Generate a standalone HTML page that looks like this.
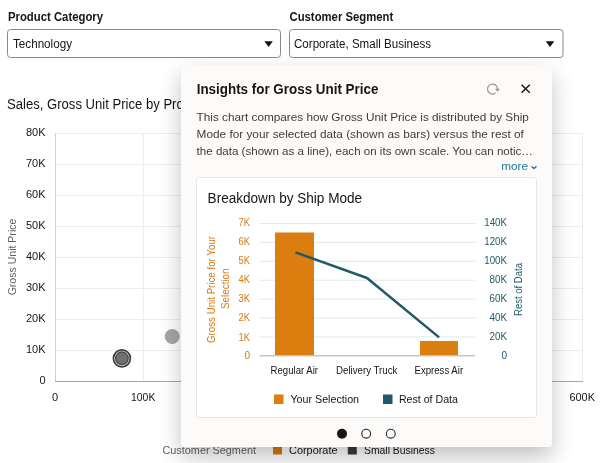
<!DOCTYPE html>
<html><head><meta charset="utf-8"><title>Insights</title>
<style>
html,body{margin:0;padding:0;background:#fff;}
body{width:600px;height:463px;overflow:hidden;position:relative;font-family:"Liberation Sans",sans-serif;}
svg{position:absolute;left:0;top:0;display:block;will-change:transform}
text{font-family:"Liberation Sans",sans-serif;}
.pop{position:absolute;left:181px;top:64.500px;width:371px;height:382px;background:#fcfbfa;border-radius:3px;box-shadow:0 10px 22px rgba(0,0,0,.24);}
.card{position:absolute;left:196px;top:177px;width:340.500px;height:241px;background:#fff;border:1px solid #e9e6e3;border-radius:3px;box-sizing:border-box}
</style></head><body>
<!-- background layer -->
<svg id="bg" width="600" height="463" viewBox="0 0 600 463">
  <text x="8" y="21" font-size="12" font-weight="700" fill="#161513" textLength="95" lengthAdjust="spacingAndGlyphs">Product Category</text>
  <text x="289.500" y="21" font-size="12" font-weight="700" fill="#161513" textLength="103.700" lengthAdjust="spacingAndGlyphs">Customer Segment</text>
  <rect x="7.500" y="29.500" width="273" height="28" rx="3" fill="#fff" stroke="#8b8987"/>
  <rect x="289.500" y="29.500" width="273.500" height="28" rx="3" fill="#fff" stroke="#8b8987"/>
  <text x="13" y="48" font-size="12" fill="#161513" textLength="59" lengthAdjust="spacingAndGlyphs">Technology</text>
  <text x="294" y="48" font-size="12" fill="#161513" textLength="137" lengthAdjust="spacingAndGlyphs">Corporate, Small Business</text>
  <path d="M264.300 41.200h8.600l-4.300 5.700z" fill="#161513"/>
  <path d="M545.700 41.200h8.600l-4.300 5.700z" fill="#161513"/>
  <text x="7" y="109" font-size="14" fill="#161513" textLength="201.500" lengthAdjust="spacingAndGlyphs">Sales, Gross Unit Price by Product</text>
  <!-- grid -->
  <g stroke="#e9eef3" stroke-width="1" fill="none">
    <path d="M55 133.500H583M55 164.500H583M55 195.500H583M55 226.500H583M55 257.500H583M55 288.500H583M55 319.500H583M55 350.500H583"/>
    <path d="M143.500 133V381M231.500 133V381M319.500 133V381M406.500 133V381M494.500 133V381M582.500 133V381"/>
  </g>
  <path d="M55.500 133V381" stroke="#d0d0d0" fill="none"/>
  <path d="M55 381.500H583" stroke="#a8a8a8" fill="none"/>
  <g font-size="11" fill="#161513" text-anchor="end">
    <text x="45.500" y="136.0">80K</text><text x="45.500" y="167.0">70K</text><text x="45.500" y="198.1">60K</text><text x="45.500" y="229.1">50K</text>
    <text x="45.500" y="260.2">40K</text><text x="45.500" y="291.2">30K</text><text x="45.500" y="322.3">20K</text><text x="45.500" y="353.3">10K</text><text x="45.500" y="384.0">0</text>
  </g>
  <g font-size="11" fill="#161513" text-anchor="middle">
    <text x="55" y="400.700">0</text><text x="143.200" y="400.700" textLength="24.300" lengthAdjust="spacingAndGlyphs">100K</text><text x="582.200" y="400.700" textLength="25.500" lengthAdjust="spacingAndGlyphs">600K</text>
  </g>
  <text transform="translate(16.200,257) rotate(-90)" font-size="11" fill="#66635f" text-anchor="middle" textLength="76.700" lengthAdjust="spacingAndGlyphs">Gross Unit Price</text>
  <circle cx="172.200" cy="336.500" r="7.500" fill="#a6a6a6"/>
  <circle cx="121.900" cy="358.300" r="8.500" fill="#e8e8e8" stroke="#3d3d3d" stroke-width="1.700"/>
  <circle cx="121.900" cy="358.300" r="6.300" fill="#717171" stroke="#4a4a4a" stroke-width="1.300"/>
  <text x="162.500" y="453.500" font-size="11" fill="#66635f" textLength="93.500" lengthAdjust="spacingAndGlyphs">Customer Segment</text>
  <rect x="273" y="445" width="9" height="9.500" fill="#d97a12"/>
  <text x="289" y="453.500" font-size="11" fill="#161513" textLength="48.500" lengthAdjust="spacingAndGlyphs">Corporate</text>
  <rect x="347.800" y="445" width="9" height="9.500" fill="#3a3a3a"/>
  <text x="364" y="453.500" font-size="11" fill="#161513" textLength="71" lengthAdjust="spacingAndGlyphs">Small Business</text>
</svg>
<div class="pop"></div>
<div class="card"></div>
<svg id="fg" width="600" height="463" viewBox="0 0 600 463">
  <text x="196.700" y="93.500" font-size="14" font-weight="700" fill="#161513" textLength="181.700" lengthAdjust="spacingAndGlyphs">Insights for Gross Unit Price</text>
  <g font-size="11.500" fill="#3f3c39">
    <text x="196.600" y="120.700" textLength="332.300" lengthAdjust="spacingAndGlyphs">This chart compares how Gross Unit Price is distributed by Ship</text>
    <text x="196.600" y="137.700" textLength="327.300" lengthAdjust="spacingAndGlyphs">Mode for your selected data (shown as bars) versus the rest of</text>
    <text x="196.600" y="154.500" textLength="336.300" lengthAdjust="spacingAndGlyphs">the data (shown as a line), each on its own scale. You can notic…</text>
  </g>
  <text x="501.200" y="170.300" font-size="11" fill="#22789a" textLength="26.800" lengthAdjust="spacingAndGlyphs">more</text>
  <path d="M531.900 166.700l2.100 1.900l2.100 -1.900" stroke="#22789a" stroke-width="1.400" fill="none" stroke-linecap="round" stroke-linejoin="round"/>
  <!-- refresh + close -->
  <path d="M497.300 90.300A5 5 0 1 0 495.500 93" fill="none" stroke="#9b9997" stroke-width="1.300"/>
  <path d="M495 88.800h5l-2.500 3z" fill="#9b9997"/>
  <path d="M521.500 84.700l8.300 8.100M529.800 84.700l-8.300 8.100" stroke="#161513" stroke-width="1.400" fill="none"/>
  <text x="207.600" y="203" font-size="14" fill="#161513" textLength="154.500" lengthAdjust="spacingAndGlyphs">Breakdown by Ship Mode</text>
  <!-- inner chart grid -->
  <g stroke="#e3e8ec" stroke-width="1">
    <path d="M259.500 223.5H475M259.500 242.4H475M259.500 261.3H475M259.500 280.2H475M259.500 299.1H475M259.500 318.0H475M259.500 336.9H475"/>
  </g>
  <path d="M259.500 355.800H475" stroke="#a8a8a8"/>
  <rect x="275" y="232.500" width="39" height="122.500" fill="#dc7d10"/>
  <rect x="420" y="341" width="38" height="14" fill="#dc7d10"/>
  <path d="M295.500 252.400L367 278L439.100 337.400" stroke="#1f5a66" stroke-width="2.500" fill="none" stroke-linejoin="round"/>
  <g font-size="10" fill="#d9780f" text-anchor="end">
    <text x="250" y="226.200" textLength="11.4" lengthAdjust="spacingAndGlyphs">7K</text><text x="250" y="245.300" textLength="11.4" lengthAdjust="spacingAndGlyphs">6K</text><text x="250" y="264.300" textLength="11.4" lengthAdjust="spacingAndGlyphs">5K</text><text x="250" y="283.300" textLength="11.4" lengthAdjust="spacingAndGlyphs">4K</text>
    <text x="250" y="302.400" textLength="11.4" lengthAdjust="spacingAndGlyphs">3K</text><text x="250" y="321.400" textLength="11.4" lengthAdjust="spacingAndGlyphs">2K</text><text x="250" y="340.500" textLength="11.4" lengthAdjust="spacingAndGlyphs">1K</text><text x="250" y="358.500">0</text>
  </g>
  <g font-size="10" fill="#1f5a66" text-anchor="end">
    <text x="507" y="226.200" textLength="22.7" lengthAdjust="spacingAndGlyphs">140K</text><text x="507" y="245.300" textLength="22.7" lengthAdjust="spacingAndGlyphs">120K</text><text x="507" y="264.300" textLength="22.7" lengthAdjust="spacingAndGlyphs">100K</text><text x="507" y="283.300" textLength="17.5" lengthAdjust="spacingAndGlyphs">80K</text>
    <text x="507" y="302.400" textLength="17.5" lengthAdjust="spacingAndGlyphs">60K</text><text x="507" y="321.400" textLength="17.5" lengthAdjust="spacingAndGlyphs">40K</text><text x="507" y="339.700" textLength="17.5" lengthAdjust="spacingAndGlyphs">20K</text><text x="507" y="358.500">0</text>
  </g>
  <g font-size="10" fill="#d9780f" text-anchor="middle">
    <text transform="translate(215,289.500) rotate(-90)" textLength="107" lengthAdjust="spacingAndGlyphs">Gross Unit Price for Your</text>
    <text transform="translate(228.500,288.700) rotate(-90)" textLength="40.500" lengthAdjust="spacingAndGlyphs">Selection</text>
  </g>
  <text transform="translate(522,289.500) rotate(-90)" font-size="10" fill="#1f5a66" text-anchor="middle" textLength="53" lengthAdjust="spacingAndGlyphs">Rest of Data</text>
  <g font-size="10" fill="#161513" text-anchor="middle">
    <text x="294.300" y="374" textLength="47.400" lengthAdjust="spacingAndGlyphs">Regular Air</text><text x="366.700" y="374" textLength="61.400" lengthAdjust="spacingAndGlyphs">Delivery Truck</text><text x="438.800" y="374" textLength="48.600" lengthAdjust="spacingAndGlyphs">Express Air</text>
  </g>
  <rect x="274" y="394.500" width="9.500" height="9.500" fill="#dc7d10"/>
  <text x="290.400" y="403.400" font-size="11.500" fill="#161513" textLength="68.700" lengthAdjust="spacingAndGlyphs">Your Selection</text>
  <rect x="383" y="394.500" width="9.500" height="9.500" fill="#1f5a66"/>
  <text x="398.900" y="403.400" font-size="11.500" fill="#161513" textLength="59.100" lengthAdjust="spacingAndGlyphs">Rest of Data</text>
  <circle cx="342" cy="433.700" r="5" fill="#161513"/>
  <circle cx="366.200" cy="433.700" r="4.400" fill="#fff" stroke="#2a2927" stroke-width="1.100"/>
  <circle cx="390.800" cy="433.700" r="4.400" fill="#fff" stroke="#2a2927" stroke-width="1.100"/>
</svg>
</body></html>
